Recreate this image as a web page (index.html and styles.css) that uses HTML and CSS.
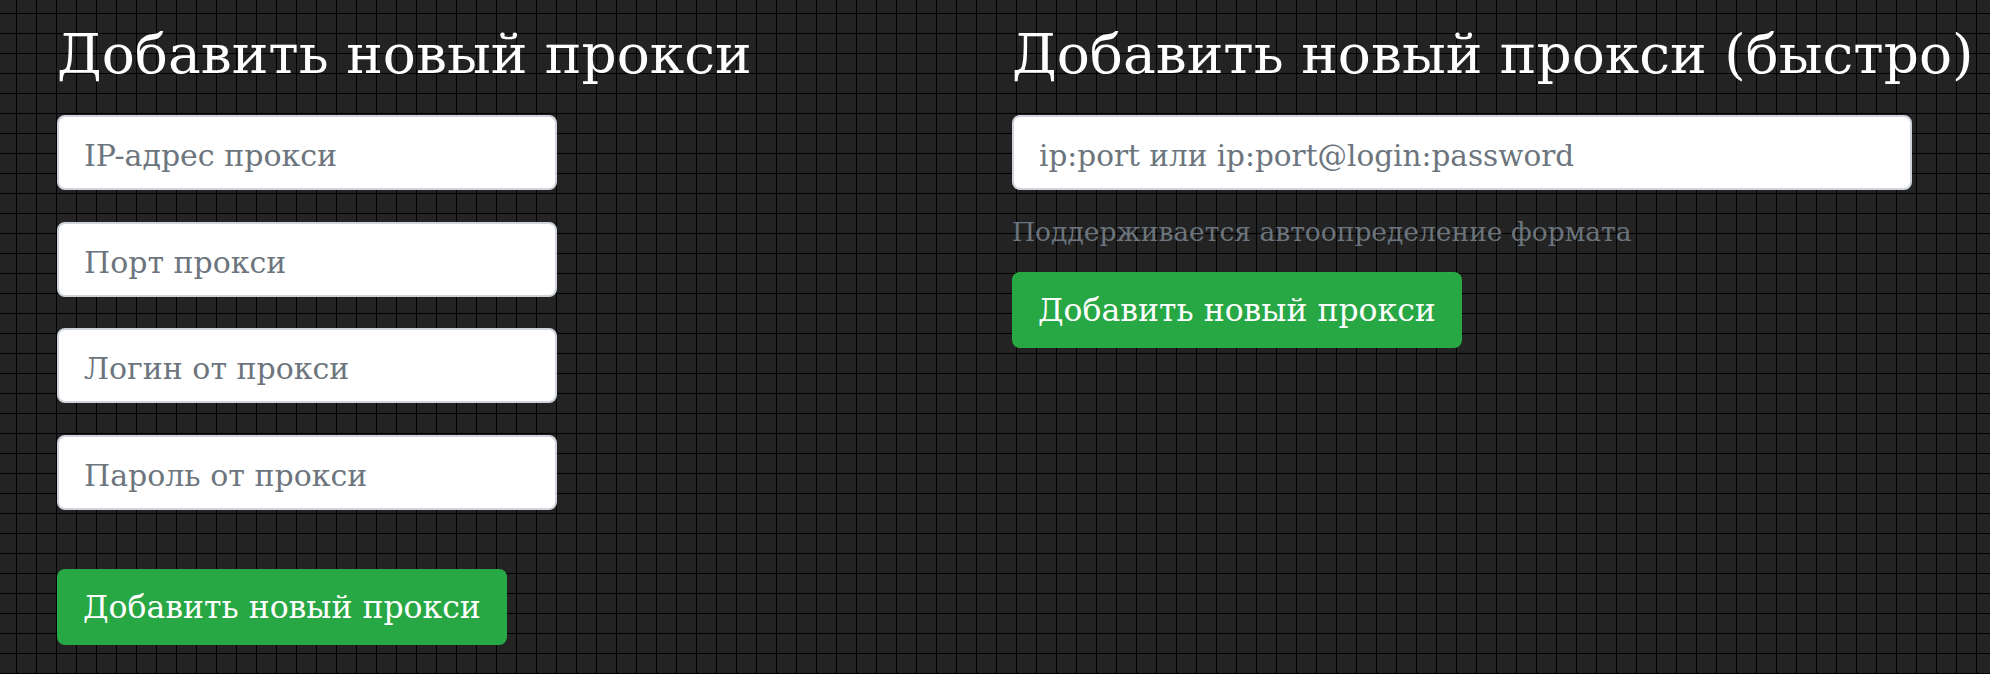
FILE: index.html
```html
<!DOCTYPE html>
<html lang="ru">
<head>
    <meta charset="UTF-8">
    <meta name="viewport" content="width=device-width, initial-scale=1.0">
    <title>Прокси</title>
    <link rel="stylesheet" href="styles.css">
</head>
<body>
    <div class="page">
        <div class="col col-left">
            <h2>Добавить новый прокси</h2>
            <form class="proxy-form">
                <input class="field" type="text" placeholder="IP-адрес прокси">
                <input class="field" type="text" placeholder="Порт прокси">
                <input class="field" type="text" placeholder="Логин от прокси">
                <input class="field" type="password" placeholder="Пароль от прокси">
                <button type="button" class="btn-add btn-bottom">Добавить новый прокси</button>
            </form>
        </div>

        <div class="col col-right">
            <h2>Добавить новый прокси (быстро)</h2>
            <form class="proxy-form">
                <input class="field field-wide" type="text" placeholder="ip:port или ip:port@login:password">
                <div class="hint">Поддерживается автоопределение формата</div>
                <button type="button" class="btn-add">Добавить новый прокси</button>
            </form>
        </div>
    </div>
</body>
</html>
```

FILE: styles.css
```css
body {
    margin: 0;
    font-family: "DejaVu Serif", "Liberation Serif", serif;
    background-color: #232323;
    background-image:
        linear-gradient(to right, #000 1px, transparent 1px),
        linear-gradient(to bottom, #000 1px, transparent 1px);
    background-size: 20px 20px;
    background-position: 16px 13px;
    min-height: 674px;
}
.page {
    display: grid;
    grid-template-columns: 955px 955px;
    padding: 22px 0 0 57px;
}
h2 {
    margin: 0 0 29px;
    font-size: 55px;
    line-height: 64px;
    font-weight: normal;
    color: #fff;
    white-space: nowrap;
}
.proxy-form {
    display: flex;
    flex-direction: column;
    align-items: flex-start;
}
.field {
    box-sizing: border-box;
    width: 500px;
    height: 75px;
    margin-bottom: 31.5px;
    padding: 6px 25px 0;
    border: 2px solid #ced4da;
    border-radius: 8px;
    background: #fff;
    font-family: inherit;
    font-size: 30px;
    color: #495057;
}
.field::placeholder {
    color: #6c757d;
}
.field-wide {
    width: 900px;
    margin-bottom: 26px;
    font-size: 29.5px;
}
.hint {
    font-size: 26.5px;
    line-height: 32px;
    color: #6c757d;
    margin-bottom: 24px;
}
.btn-add {
    box-sizing: border-box;
    height: 75.5px;
    padding: 0 26px;
    border: none;
    border-radius: 8px;
    background-color: #28a745;
    color: #fff;
    font-family: inherit;
    font-size: 31.5px;
    cursor: pointer;
}
.btn-add:hover {
    background-color: #218838;
}
.btn-bottom {
    margin-top: 28px;
}
```
